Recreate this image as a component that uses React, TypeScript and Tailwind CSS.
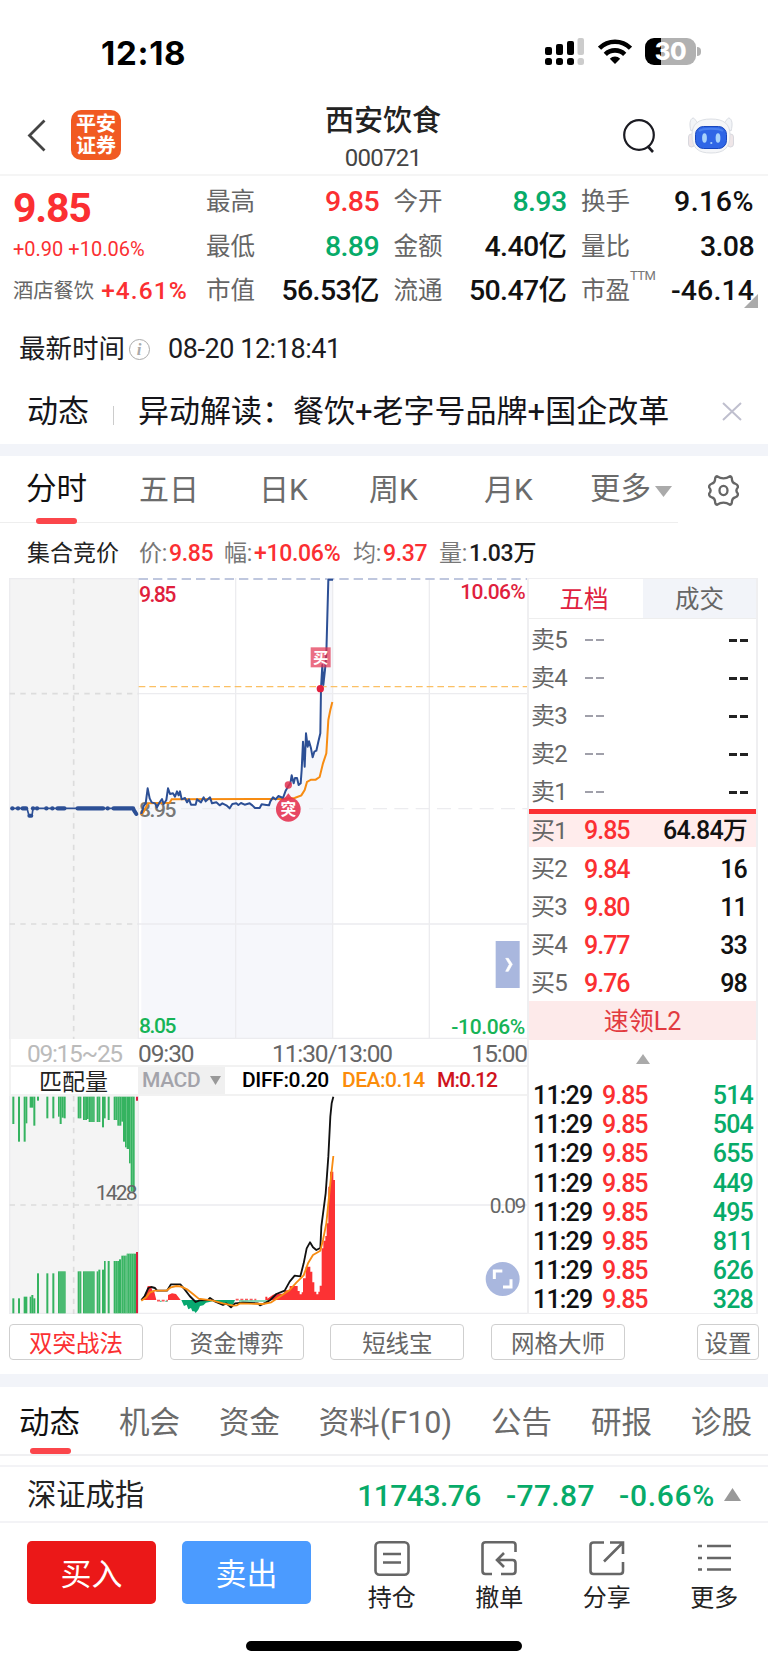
import clsx from "clsx"

const RED = "text-[#fb2f32]"
const GREEN = "text-[#07ab69]"

const quoteStats = [
  [
    { label: "最高", value: "9.85", color: RED },
    { label: "今开", value: "8.93", color: GREEN },
    { label: "换手", value: "9.16%", color: "text-[#111] tracking-[0.5px]" },
  ],
  [
    { label: "最低", value: "8.89", color: GREEN },
    { label: "金额", value: "4.40亿", color: "text-[#111]" },
    { label: "量比", value: "3.08", color: "text-[#111]" },
  ],
  [
    { label: "市值", value: "56.53亿", color: "text-[#111]" },
    { label: "流通", value: "50.47亿", color: "text-[#111]" },
    { label: "市盈", value: "-46.14", color: "text-[#111] tracking-[0.1px]", sup: "TTM" },
  ],
]

const asks = ["卖5", "卖4", "卖3", "卖2", "卖1"]
const bids = [
  { label: "买1", price: "9.85", volume: "64.84万" },
  { label: "买2", price: "9.84", volume: "16" },
  { label: "买3", price: "9.80", volume: "11" },
  { label: "买4", price: "9.77", volume: "33" },
  { label: "买5", price: "9.76", volume: "98" },
]
const ticks = ["514", "504", "655", "449", "495", "811", "626", "328"]

// x, width, length measured from the top edge
const matchedBars = [
  [38, 6, 84], [55, 6, 137], [72, 6, 137], [78, 5, 82], [90, 11, 35], [101, 6, 89], [112, 6, 14],
  [140, 6, 67], [158, 6, 67], [175, 5, 62], [180, 6, 84], [186, 6, 65], [192, 6, 67],
  [234, 11, 67], [250, 12, 72], [262, 5, 69], [267, 18, 78], [291, 11, 78], [307, 6, 94], [313, 5, 67],
  [324, 6, 72], [342, 11, 72], [353, 12, 89], [365, 5, 77], [370, 6, 137], [376, 5, 154], [381, 7, 159],
  [388, 5, 202], [393, 12, 287],
]

// x, width, top
const unmatchedBars = [
  [38, 6, 775], [55, 6, 775], [72, 11, 770], [90, 5, 770], [95, 6, 765], [101, 6, 775], [112, 6, 700],
  [140, 6, 700], [158, 6, 700], [175, 23, 694], [234, 11, 694], [250, 35, 694], [291, 5, 694], [296, 6, 689],
  [307, 6, 689], [313, 5, 663], [324, 6, 663], [342, 16, 663], [358, 7, 658], [365, 16, 647], [381, 28, 641],
]

const auctionDots = [[38, 38], [55, 55], [69, 79], [100, 100], [112, 112], [140, 140], [158, 158], [174, 194], [234, 310], [324, 324], [342, 400]]

const priceLine =
  "425,732 432,708 438,700 444,655 450,685 456,697 466,700 472,712 480,697 487,687 492,702 500,690 505,655 511,672 520,670 526,680 532,664 537,676 541,664 546,688 556,684 562,697 568,688 574,704 588,704 592,688 604,697 612,682 618,694 631,682 637,700 650,697 660,706 668,700 680,706 690,715 698,702 710,700 716,705 724,699 735,704 750,700 758,706 766,714 780,714 786,703 800,705 808,706 812,694 820,682 828,688 836,678 850,684 858,662 866,648 872,640 876,616 882,640 886,624 892,624 897,645 903,640 906,600 910,515 915,590 919,490 924,530 928,514 934,535 939,562 944,545 950,542 956,515 962,490 964,355 968,285 971,345 976,300 980,250 986,29 1000,29"
const averageLine =
  "425,735 432,725 445,700 510,698 516,688 850,687 885,684 905,676 915,660 922,636 934,629 948,629 960,621 970,580 980,550 986,450 992,420 998,396"
const diffLine =
  "425,780 435,768 446,744 455,741 466,744 472,752 502,752 514,733 542,733 555,748 570,768 588,786 600,781 625,780 631,774 645,784 670,795 680,790 694,802 706,790 730,788 775,790 781,796 800,787 812,780 830,762 855,752 870,725 885,707 902,709 912,670 921,625 931,607 940,622 950,630 962,624 965,560 978,460 986,350 992,230 996,190 1001,170"
const deaLine =
  "425,782 440,772 450,758 465,752 500,752 514,742 530,738 545,740 562,748 580,762 597,776 640,782 670,790 700,797 712,796 722,790 790,792 815,787 840,770 870,750 890,728 912,706 925,670 940,645 962,632 970,600 980,550 986,490 992,430 1001,348"

function StatusBar() {
  return (
    <div className="flex h-[92px] items-start pl-[101px] pr-[67px] pt-9">
      <span className="mt-px font-['Inter'] text-[33px] font-bold leading-8 tracking-[0.7px] text-black">12:18</span>
      <div className="ml-auto flex items-center pt-0.5">
        <svg width="39" height="27" viewBox="0 0 39 27">
          <rect x="0" y="9" width="7" height="8" rx="2" />
          <rect x="11" y="6" width="7" height="11" rx="2" />
          <rect x="22" y="3" width="7" height="14" rx="2" />
          <rect x="32.500" y="0" width="6.500" height="17" rx="2" fill="#ccc" />
          <rect x="0" y="20" width="7" height="7" rx="2.500" />
          <rect x="11" y="20" width="7" height="7" rx="2.500" />
          <rect x="22" y="20" width="7" height="7" rx="2.500" />
          <rect x="32.500" y="20" width="6.500" height="7" rx="2.500" fill="#ccc" />
        </svg>
        <svg className="ml-3.5" width="34" height="25" viewBox="0 0 34 25" fill="none" stroke="#000" strokeWidth="4.600">
          <path d="M1.500 9.200a22 22 0 0 1 31 0" />
          <path d="M7.300 15.400a13.800 13.800 0 0 1 19.400 0" />
          <path d="M17 25l-5.200-5.300a7.400 7.400 0 0 1 10.400 0z" fill="#000" stroke="none" />
        </svg>
        <div className="relative ml-[13px] flex h-[27px] w-[51px] items-center justify-center overflow-hidden rounded-[9px] bg-[linear-gradient(90deg,#000_0_16px,#b1b1b1_16px)]">
          <span className="font-['Inter'] text-[24px] font-extrabold leading-none tracking-[-0.5px] text-white">30</span>
        </div>
        <span className="ml-[1px] h-[9px] w-[4px] rounded-r-full bg-[#b1b1b1]" />
      </div>
    </div>
  )
}

function Robot() {
  return (
    <svg width="46" height="37" viewBox="0 0 46 37">
      <path d="M3 14C1 7 2 2 5 1c2 0 3 4 6 6zM43 14c2-7 1-12-2-13-2 0-3 4-6 6z" fill="#f2f4f7" stroke="#d9dce2" />
      <rect x="0.500" y="17" width="6" height="13" rx="3" fill="#efe6e8" stroke="#d8d8de" />
      <rect x="39.500" y="17" width="6" height="13" rx="3" fill="#efe6e8" stroke="#d8d8de" />
      <path d="M23 2C10 2 4 7 4 18c0 13 6 18 19 18s19-5 19-18C42 7 36 2 23 2z" fill="#f5f6f8" stroke="#dcdfe4" />
      <rect x="7.500" y="9.500" width="31" height="22" rx="8" fill="#2f66e6" stroke="#1746bd" />
      <path d="M11 14c4-3 20-3 24 0" fill="none" stroke="#4a80ee" strokeWidth="2" />
      <ellipse cx="16.500" cy="21" rx="2.400" ry="4.800" fill="#a9d3fb" />
      <ellipse cx="30" cy="21" rx="2.400" ry="4.800" fill="#a9d3fb" />
      <circle cx="23.300" cy="26" r="1.100" fill="#a9d3fb" />
    </svg>
  )
}

function NavBar() {
  return (
    <div className="flex h-[84px] items-start border-b-2 border-[#f5f5f5] pl-[27px] pr-[34px]">
      <svg className="mt-[27px]" width="19" height="33" viewBox="0 0 19 33" fill="none" stroke="#444" strokeWidth="2.800">
        <path d="M17.500 1.500L2.500 16.500l15 15" />
      </svg>
      <div className="ml-[25px] mt-[18px] flex size-[50px] flex-col items-center justify-center rounded-[10px] bg-[#f15a22] text-[20px] font-bold leading-[22px] text-white">
        <span className="h-[22px]">平安</span>
        <span className="h-[22px]">证券</span>
      </div>
      <div className="ml-[123px] w-[278px] text-center">
        <h1 className="mt-[14px] text-[29px] font-medium leading-[30px] text-[#222]">西安饮食</h1>
        <p className="mt-[9px] text-[24px] leading-[26px] tracking-[-0.7px] text-[#444]">000721</p>
      </div>
      <svg className="ml-auto mt-[27px]" width="33" height="34" viewBox="0 0 33 34" fill="none" stroke="#1b1b22" strokeWidth="2.200">
        <circle cx="16" cy="16" r="14.800" />
        <path d="M24.500 27l5.500 6" strokeWidth="2.600" />
      </svg>
      <div className="ml-[32px] mt-[25px]"><Robot /></div>
    </div>
  )
}

function QuoteSummary() {
  return (
    <div className="relative flex h-[136px] pl-[13px] pr-[14px]">
      <div className="w-[193px] whitespace-nowrap">
        <p className={`mt-[12px] text-[41px] font-bold leading-[41px] tracking-[-1.2px] ${RED}`}>9.85</p>
        <p className={`mt-[10px] text-[20px] leading-[20px] ${RED}`}>+0.90 +10.06%</p>
        <p className="mt-[20px] flex items-center leading-[24px]">
          <span className="text-[20.300px] text-[#666]">酒店餐饮</span>
          <span className={`ml-[7px] text-[24.500px] font-medium tracking-[1.100px] ${RED}`}>+4.61%</span>
        </p>
      </div>
      <div className="mt-[4px] grid flex-1 grid-rows-[45px_45px_43px]">
        {quoteStats.map((row, i) => (
          <div key={i} className="grid grid-cols-3 gap-x-[14.500px]">
            {row.map((stat) => (
              <div key={stat.label} className="relative flex items-center justify-between whitespace-nowrap text-[28.500px] font-medium leading-none tracking-[-0.6px]">
                <span className="text-[24.500px] font-normal tracking-normal text-[#666]">{stat.label}</span>
                <span className={stat.color}>{stat.value}</span>
                {stat.sup && <span className="absolute -top-px left-[49px] text-[13px] font-normal text-[#777]">{stat.sup}</span>}
              </div>
            ))}
          </div>
        ))}
      </div>
      <svg className="absolute bottom-[4px] right-[10px]" width="14" height="14"><path d="M14 0v14H0z" fill="#aaa" /></svg>
    </div>
  )
}

function NewsRows() {
  return (
    <>
      <div className="flex h-[74px] items-center pl-[19px] pt-px leading-none text-[#1c1c22]">
        <span className="text-[26.500px]">最新时间</span>
        <span className="ml-[4px] flex size-[21px] items-center justify-center rounded-full border-[1.500px] border-[#aaa] pr-px font-['Liberation_Serif'] text-[17px] font-bold italic leading-none text-[#aaa]">i</span>
        <span className="ml-[18px] text-[27px] tracking-[-0.45px]">08-20 12:18:41</span>
      </div>
      <div className="flex h-[58px] items-center pl-[27px] pr-[26px] pb-2 leading-none text-[#15151a]">
        <span className="text-[31px]">动态</span>
        <span className="ml-[24px] mt-2 h-[19px] w-px bg-[#ccc]" />
        <span className="ml-[24px] whitespace-nowrap text-[31px]">异动解读：餐饮+老字号品牌+国企改革</span>
        <svg className="ml-auto" width="20" height="19" stroke="#bfbfce" strokeWidth="2"><path d="M1 1l18 17M19 1L1 18" /></svg>
      </div>
    </>
  )
}

function ChartTabs() {
  return (
    <div className="relative flex h-[67px] items-center pl-[26px] text-[30px] leading-none text-[#6b6b6b]">
      <span className="w-[113px] text-[30.500px] text-[#111]">分时</span>
      <span className="w-[120px]">五日</span>
      <span className="w-[110px]">日K</span>
      <span className="w-[115px]">周K</span>
      <span className="w-[106px]">月K</span>
      <span className="text-[30.500px]">更多</span>
      <svg className="ml-[4px] mt-1" width="17" height="11"><path d="M0 0h17l-8.500 11z" fill="#aaa" /></svg>
      <svg className="ml-[36px] mt-0.5" width="31" height="31" viewBox="0 0 31 31" fill="none" stroke="#666" strokeWidth="2.300" strokeLinejoin="round">
        <path d="M9 1.200Q15.500 5.500 22 1.200Q24 1.500 24 5Q24.500 8 27 8.500Q30.500 9.800 29.800 12.500Q27 15.500 29.800 18.500Q30.500 21.200 27 22.500Q24.500 23 24 26Q24 29.500 22 29.800Q15.500 25.500 9 29.800Q7 29.500 7 26Q6.500 23 4 22.500Q0.500 21.200 1.200 18.500Q4 15.500 1.200 12.500Q0.500 9.800 4 8.500Q6.500 8 7 5Q7 1.500 9 1.200z" />
        <ellipse cx="15.500" cy="15.500" rx="4" ry="4.600" />
      </svg>
      <span className="absolute bottom-0 left-0 h-px w-[678px] bg-[#eee]" />
      <span className="absolute -bottom-px left-[36px] h-[6px] w-[41px] rounded-[3px] bg-[#fb464b]" />
    </div>
  )
}

function ChartInfo() {
  const items = [
    { label: "价:", value: "9.85", color: RED, box: "w-[85px]" },
    { label: "幅:", value: "+10.06%", color: RED, box: "w-[129px]" },
    { label: "均:", value: "9.37", color: RED, box: "w-[86px]" },
    { label: "量:", value: "1.03万", color: "text-[#1b1b1b]", box: "w-[100px]" },
  ]
  return (
    <div className="flex h-[55px] items-center pt-1.5 pl-[27px] text-[23px] leading-none tracking-[-0.3px]">
      <span className="w-[112px] text-[#222] tracking-normal">集合竞价</span>
      {items.map((item) => (
        <span key={item.label} className={clsx("whitespace-nowrap text-[#777]", item.box)}>
          {item.label}
          <span className={`ml-0.5 font-medium ${item.color}`}>{item.value}</span>
        </span>
      ))}
    </div>
  )
}

function PriceChart() {
  return (
    <svg className="block h-[461px] w-[518px]" viewBox="28 24 1554 1383" fontSize="71">
      <rect x="28" y="24" width="388" height="1383" fill="#f4f4f4" />
      <polygon points={`425,1407 ${priceLine} 1000,1407`} fill="#f6f7fb" />
      <g stroke="#ececef" strokeWidth="4" fill="none">
        <path d="M30 24V1407M416 24V1407M708 24V1407M999 24V1407M1289 24V1407M416 371H1582M416 1062H1582M28 26H416M416 1405H1582" />
        <path d="M416 716H1582" strokeDasharray="42 22" />
      </g>
      <path d="M222 24V1407M30 371H416M30 1062H416" stroke="#dcdcdc" strokeWidth="5" strokeDasharray="16 16" />
      <path d="M417 27H1582" stroke="#bfc7de" strokeWidth="6" strokeDasharray="28 15" />
      <path d="M417 350H1582" stroke="#fbc064" strokeWidth="4" strokeDasharray="20 12" />
      <g stroke="#2c4f95" fill="none" strokeLinecap="round" strokeLinejoin="round">
        <polyline points="38,715 82,715 88,737 97,737 100,715 400,715 410,732" strokeWidth="5" />
        {auctionDots.map(([from, to]) => (
          <path key={from} d={`M${from} 715H${to + 0.1}`} strokeWidth="13" />
        ))}
        <path d="M89 737H95M403 721L410 732" strokeWidth="12" />
      </g>
      <g fontWeight="500">
        <text x="418" y="95" fill="#e01f3d" textLength="112" fontSize="64">9.85</text>
        <text x="418" y="742" fill="#777" textLength="112" fontSize="63">8.95</text>
        <text x="418" y="1388" fill="#16b457" textLength="112" fontSize="63">8.05</text>
        <text x="1382" y="88" fill="#e01f3d" textLength="196" fontSize="63">10.06%</text>
        <text x="1355" y="1393" fill="#16b457" textLength="222" fontSize="63">-10.06%</text>
      </g>
      <polyline points={averageLine} fill="none" stroke="#f78c12" strokeWidth="6" />
      <polyline points={priceLine} fill="none" stroke="#2c4f95" strokeWidth="6" strokeLinejoin="round" />
      <circle cx="962" cy="356" r="11" fill="#e21f3f" />
      <circle cx="866" cy="645" r="11" fill="#e2304e" opacity="0.85" />
      <rect x="933" y="232" width="60" height="60" fill="#e2304e" opacity="0.7" />
      <text x="963" y="279" textAnchor="middle" fontSize="46" fontWeight="700" fill="#fff">买</text>
      <g fill="#e6304f" opacity="0.88">
        <circle cx="866" cy="718" r="37" />
        <path d="M855 684l11-14 11 14z" />
      </g>
      <text x="866" y="735" textAnchor="middle" fontSize="47" fontWeight="700" fill="#fff">突</text>
      <rect x="1488" y="1113" width="72" height="141" fill="#a9b7de" />
      <path d="M1518 1165h8l12 18-12 21h-8l11-21z" fill="#fff" stroke="#fff" strokeWidth="2" />
    </svg>
  )
}

function MacdChart() {
  return (
    <svg className="block h-[218px] w-[518px]" viewBox="28 168 1554 654" fontSize="63">
      <rect x="28" y="168" width="388" height="654" fill="#f4f4f4" />
      <path d="M30 168V822M416 168V822M416 495H1582M28 820H1582" stroke="#ececef" strokeWidth="4" />
      <path d="M222 168V822M30 495H416" stroke="#dcdcdc" strokeWidth="5" strokeDasharray="16 16" />
      <g fill="#35b360">
        {matchedBars.map(([x, w, h]) => <rect key={x} x={x} y="170" width={w} height={h - 2} />)}
        {unmatchedBars.map(([x, w, y]) => <rect key={x} x={x} y={y} width={w} height={820 - y} />)}
      </g>
      {/* hairline between neighbouring bars */}
      <path d="M240 170V235M256 170V240M274 170V246M280 170V246M297 170V246M348 170V240M359 170V257M399 170V455M181 694V820M187 694V820M193 694V820M240 694V820M256 694V820M262 694V820M268 694V820M274 694V820M280 694V820M348 663V820M354 663V820M366 658V820M372 647V820M378 647V820M384 641V820M390 641V820M396 641V820M402 641V820" stroke="#8fd3a6" strokeWidth="1.500" />
      <path d="M409 170h6v12h-6zM409 636h6v184h-6z" fill="#d81e3e" />
      <path d="M430 780l10-20 4-22h10l4 14h5l7 28zM505 780v-15l12-5 12 2 14 18zM797 780v-10h6v6l17-12 10-3h20l8-10h12v-13h24v15h6v10h6v-6h4v-42h8v-35h14v15h6v32h6v28h6v8h6v-8h4v-18h6V625h5V602h6V588h4V550h5V440h5V395h10v25h5V780z" fill="#fc3234" />
      <path d="M545 780l8 18 8-4 5 14 8-4 4 10h6l4 5 8-10 5-11 10-2 8-8 20-4 20 2 6 8h35l6-14z" fill="#08a870" />
      <path d="M472 782H505M708 779H770" stroke="#f75a5c" strokeWidth="5" strokeDasharray="9 5" />
      <path d="M481 784H486M497 784H503M718 783H808" stroke="#5cc9a0" strokeWidth="4" />
      <polyline points={diffLine} fill="none" stroke="#111" strokeWidth="5.500" strokeLinejoin="round" />
      <polyline points={deaLine} fill="none" stroke="#f78c12" strokeWidth="5.500" strokeLinejoin="round" />
      <text x="288" y="481" fill="#666" textLength="126">1428</text>
      <text x="1470" y="520" fill="#666" textLength="110">0.09</text>
      <circle cx="1509" cy="717" r="51" fill="#a9b7de" />
      <path d="M1484 717V693H1508M1534 718V741H1510" fill="none" stroke="#fff" strokeWidth="9" />
    </svg>
  )
}

function OrderBook() {
  return (
    <div className="w-[231px] border-x-2 border-t border-b border-[#efeff1] leading-none">
      <div className="flex h-[40px] border-b border-[#eee] text-[24.500px]">
        <span className="flex w-[114px] items-center justify-center pr-1 pt-[3px] text-[#e0213f]">五档</span>
        <span className="flex flex-1 items-center justify-center bg-[#f2f4f9] pt-[3px] text-[#666]">成交</span>
      </div>
      <div className="h-[190px] pt-[2px] text-[#666]">
        {asks.map((label) => (
          <div key={label} className="flex h-[38px] items-center pl-[2px] pr-[8px]">
            <span className="w-[54px] whitespace-nowrap text-[24px] tracking-[-0.8px]">{label}</span>
            <span className="flex gap-[3px]"><i className="h-0.5 w-[8px] bg-[#a0a0aa]" /><i className="h-0.5 w-[8px] bg-[#a0a0aa]" /></span>
            <span className="ml-auto flex gap-[3px]"><i className="h-[3px] w-[8px] bg-[#222]" /><i className="h-[3px] w-[8px] bg-[#222]" /></span>
          </div>
        ))}
      </div>
      <div className="h-[192px] border-t-[5px] border-[#fb2f32]">
        {bids.map((bid, i) => (
          <div key={bid.label} className={clsx("flex items-center pl-[2px] pr-[9px]", i === 0 ? "mb-[3px] h-[33px] bg-[#ffecec]" : "h-[38px]")}>
            <span className="w-[53px] whitespace-nowrap text-[24px] tracking-[-0.8px] text-[#666]">{bid.label}</span>
            <span className={`text-[25px] font-medium tracking-[-1px] ${RED}`}>{bid.price}</span>
            <span className="ml-auto text-[25px] font-medium tracking-[-0.8px] text-[#111]">{bid.volume}</span>
          </div>
        ))}
      </div>
      <div className="flex h-[39px] items-center justify-center bg-[#fdeaea] pt-0.5 text-[25px] text-[#e23a40]">速领L2</div>
      <svg className="mx-auto mt-[14px] block" width="14" height="10"><path d="M7 0l7 10H0z" fill="#aaa" /></svg>
      <div className="mt-[17px]">
        {ticks.map((volume) => (
          <div key={volume} className="flex h-[29.200px] items-center pl-[4px] pr-[3px] text-[25px] font-medium tracking-[-0.8px]">
            <span className="w-[69px] text-[#111]">11:29</span>
            <span className={`${RED} tracking-[-1px]`}>9.85</span>
            <span className={`ml-auto ${GREEN}`}>{volume}</span>
          </div>
        ))}
      </div>
    </div>
  )
}

function MarketPanel() {
  return (
    <div className="flex h-[736px] pl-[9px]">
      <div className="w-[518px]">
        <PriceChart />
        <div className="flex h-[28px] items-center border-b-2 border-l-2 border-[#f2f2f2] pt-[5px] text-[24.500px] leading-none tracking-[-1.100px] text-[#666]">
          <span className="w-[127px] pl-[16px] tracking-[-1.300px] text-[#bbb]">09:15~25</span>
          <span className="w-[134px]">09:30</span>
          <span>11:30/13:00</span>
          <span className="ml-auto">15:00</span>
        </div>
        <div className="flex h-[29px] items-center border-b-2 border-l-2 border-[#f2f2f2] text-[21px] font-medium leading-none tracking-[-0.35px]">
          <span className="w-[127px] pt-[3px] pr-0.5 text-center text-[23px] font-normal tracking-normal text-[#222]">匹配量</span>
          <span className="flex h-[27px] w-[87px] items-center bg-[#f0f0f0] pl-[4px] text-[#a3a3aa]">
            MACD
            <svg className="ml-[10px]" width="11" height="9"><path d="M0 0h11L5.500 9z" fill="#999" /></svg>
          </span>
          <span className="ml-[17px] w-[100px] text-black">DIFF:0.20</span>
          <span className="w-[95px] tracking-[-0.500px] text-[#fb8c0a]">DEA:0.14</span>
          <span className="tracking-[-0.900px] text-[#cf141d]">M:0.12</span>
        </div>
        <MacdChart />
      </div>
      <OrderBook />
    </div>
  )
}

function StrategyButtons() {
  return (
    <div className="flex h-[60px] items-start gap-[26.700px] pl-[9px] pr-[9px] pt-[10px] text-[23.500px] leading-none text-[#666]">
      {["双突战法", "资金博弈", "短线宝", "网格大师"].map((name, i) => (
        <button key={name} className={clsx("h-[36px] w-[134px] shrink-0 rounded-[4px] border border-[#cfcfcf] pt-[5px]", i === 0 && RED)}>{name}</button>
      ))}
      <button className="ml-auto h-[36px] w-[62px] shrink-0 rounded-[4px] border border-[#cfcfcf] pt-[5px]">设置</button>
    </div>
  )
}

function DetailTabs() {
  return (
    <div className="relative flex h-[69px] items-center justify-between border-b-2 border-[#f0f0f2] pl-[19px] pr-[16px] pt-[5px] text-[30.500px] leading-none text-[#6b6b6b]">
      <span className="text-[#111]">动态</span>
      {["机会", "资金", "资料(F10)", "公告", "研报", "诊股"].map((tab) => <span key={tab}>{tab}</span>)}
      <span className="absolute bottom-0 left-[30px] h-[6px] w-[41px] rounded-[3px] bg-[#fb464b]" />
    </div>
  )
}

function BottomBar() {
  const label = "mt-[10px] block text-[24px] leading-[24px] text-[#222]"
  return (
    <div className="flex items-start pl-[27px] pt-[18px]">
      <button className="h-[63px] w-[129px] rounded-[5px] bg-[#eb1818] pt-1 text-[31px] leading-none text-white">买入</button>
      <button className="ml-[26px] h-[63px] w-[129px] rounded-[5px] bg-[#4b9bff] pt-1 text-[31px] leading-none text-white">卖出</button>
      <div className="ml-[27px] grid grid-cols-4 text-center [&>div]:w-[107.500px]">
        <div>
          <svg className="mx-auto" width="36" height="35" viewBox="0 0 36 35" fill="none" stroke="#666" strokeWidth="2.600">
            <rect x="1.500" y="1.300" width="33" height="32.400" rx="4" />
            <path d="M9 13h18M9 21.500h18" />
          </svg>
          <span className={label}>持仓</span>
        </div>
        <div>
          <svg className="mx-auto" width="36" height="35" viewBox="0 0 36 35" fill="none" stroke="#666" strokeWidth="2.600">
            <path d="M34.500 11V4q0-2.700-3-2.700H4.500q-3 0-3 2.700v26q0 3 3 3H11M20 33h11.500q3 0 3-3V22q0-3-3-3H16.500M23 12l-7 7 7 7" />
          </svg>
          <span className={label}>撤单</span>
        </div>
        <div>
          <svg className="mx-auto" width="36" height="35" viewBox="0 0 36 35" fill="none" stroke="#666" strokeWidth="2.600">
            <path d="M15 1.500H4.500q-3 0-3 3V30q0 3 3 3H31q3 0 3-3V21M21 1.500H34V13M34 1.500L15 20.500" />
          </svg>
          <span className={label}>分享</span>
        </div>
        <div>
          <svg className="mx-auto" width="36" height="35" viewBox="0 0 36 35" fill="none" stroke="#666" strokeWidth="2.600">
            <path d="M2 5h4M11 5h24M2 17h4M11 17h24M2 28.500h4M11 28.500h24" />
          </svg>
          <span className={label}>更多</span>
        </div>
      </div>
    </div>
  )
}

export default function App() {
  return (
    <div className="h-[1665px] w-[768px] overflow-hidden bg-white font-['Roboto','Noto_Sans_CJK_SC',sans-serif]">
      <StatusBar />
      <NavBar />
      <QuoteSummary />
      <NewsRows />
      <div className="h-[12px] bg-[#f2f4f9]" />
      <ChartTabs />
      <ChartInfo />
      <MarketPanel />
      <StrategyButtons />
      <div className="h-[13px] bg-[#f2f4f9]" />
      <DetailTabs />
      <div className="mt-[9px] flex h-[58px] items-center border-y-2 border-[#f3f3f6] pl-[27px] pr-[27px] pt-1 leading-none">
        <span className="text-[29.300px] text-[#222]">深证成指</span>
        <div className={`ml-auto flex items-center text-[30px] font-medium ${GREEN}`}>
          <span className="tracking-[-0.500px]">11743.76</span>
          <span className="ml-[25px] tracking-[0.400px]">-77.87</span>
          <span className="ml-[24px] tracking-[0.700px]">-0.66%</span>
        </div>
        <svg className="ml-[9px] -mt-1" width="17" height="13"><path d="M8.500 0L17 13H0z" fill="#999" /></svg>
      </div>
      <BottomBar />
      <div className="ml-[246px] mt-[31px] h-[10px] w-[276px] rounded-full bg-black" />
    </div>
  )
}
